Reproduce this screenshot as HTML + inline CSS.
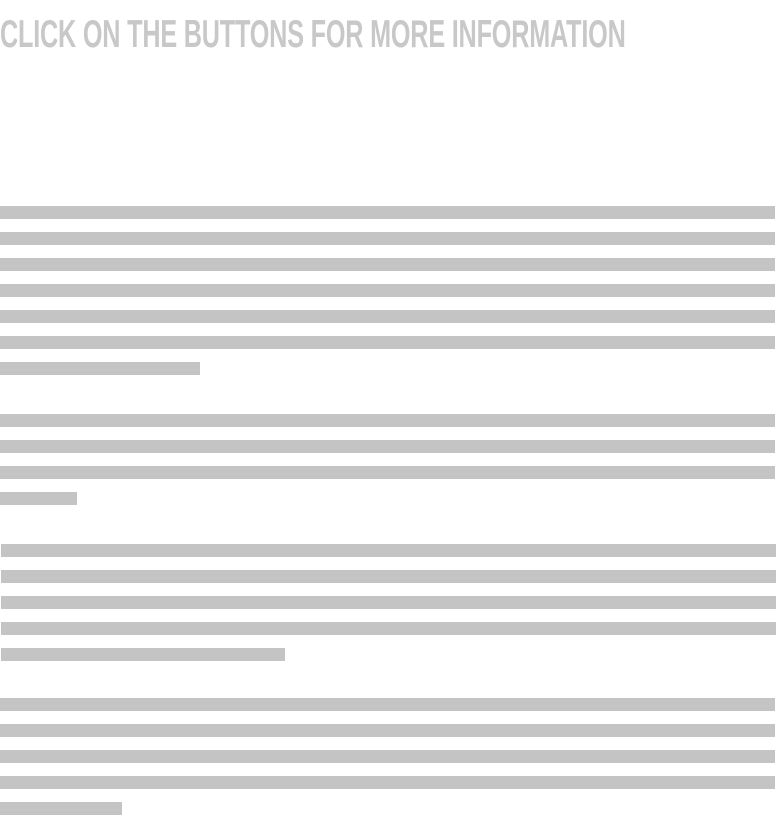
<!DOCTYPE html>
<html><head><meta charset="utf-8"><style>
html,body{margin:0;padding:0;background:#fff;width:776px;height:816px;overflow:hidden;position:relative}
h1{position:absolute;left:0;top:11px;margin:0;font-family:"Liberation Sans",sans-serif;font-weight:bold;font-size:38.5px;line-height:48px;color:#c8c8c8;white-space:nowrap;transform-origin:0 0;transform:scaleX(0.655);letter-spacing:-0.3px}
.b{position:absolute;height:13px;background:#c4c4c4}
</style></head><body>
<h1>CLICK ON THE BUTTONS FOR MORE INFORMATION</h1>
<div class="b" style="left:0;top:206px;width:775px"></div>
<div class="b" style="left:0;top:232px;width:775px"></div>
<div class="b" style="left:0;top:258px;width:775px"></div>
<div class="b" style="left:0;top:284px;width:775px"></div>
<div class="b" style="left:0;top:310px;width:775px"></div>
<div class="b" style="left:0;top:336px;width:775px"></div>
<div class="b" style="left:0;top:362px;width:200px"></div>

<div class="b" style="left:0;top:414px;width:775px"></div>
<div class="b" style="left:0;top:440px;width:775px"></div>
<div class="b" style="left:0;top:466px;width:775px"></div>
<div class="b" style="left:0;top:492px;width:77px"></div>

<div class="b" style="left:1px;top:544px;width:775px"></div>
<div class="b" style="left:1px;top:570px;width:775px"></div>
<div class="b" style="left:1px;top:596px;width:775px"></div>
<div class="b" style="left:1px;top:622px;width:775px"></div>
<div class="b" style="left:1px;top:648px;width:284px"></div>

<div class="b" style="left:0;top:698px;width:775px"></div>
<div class="b" style="left:0;top:724px;width:775px"></div>
<div class="b" style="left:0;top:750px;width:775px"></div>
<div class="b" style="left:0;top:776px;width:775px"></div>
<div class="b" style="left:0;top:802px;width:122px"></div>
</body></html>
